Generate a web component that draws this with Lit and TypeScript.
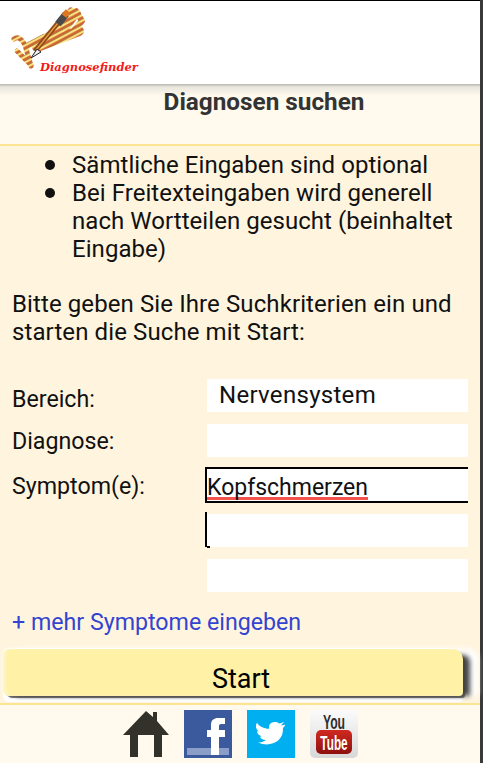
import { LitElement, html, css } from 'lit';
import { customElement } from 'lit/decorators.js';

@customElement('app-root')
export class AppRoot extends LitElement {
  static styles = css`
    :host {
      display: block;
      width: 483px;
      height: 763px;
      overflow: hidden;
      background: #3a3a3a;
      font-family: Roboto, sans-serif;
      color: #111;
    }
    .page {
      width: 480px;
      height: 763px;
      display: flex;
      flex-direction: column;
      background: #fff5df;
    }
    .header {
      height: 83px;
      flex: none;
      background: #fff;
      border-top: 1px solid #000;
    }
    .logo {
      display: block;
    }
    .logo-text {
      font-family: 'DejaVu Serif', serif;
      font-weight: 700;
      font-style: italic;
      font-size: 11.5px;
      fill: #f41a1a;
    }
    .title-bar {
      height: 62px;
      flex: none;
      box-sizing: border-box;
      background: linear-gradient(#b9b6ae 0, #e9e6de 3px, #fffaed 12px);
      border-bottom: 2px solid #fde493;
      padding: 5px 0 0 48px;
      text-align: center;
      font-size: 24.3px;
      line-height: 26px;
      font-weight: 700;
      color: #333;
    }
    .content {
      flex: 1;
      display: flex;
      flex-direction: column;
    }
    ul {
      margin: 5px 0 0;
      padding: 0 20px 0 45px;
      list-style: none;
      font-size: 24px;
      line-height: 28px;
      letter-spacing: 0.05px;
    }
    li {
      display: flex;
      gap: 17px;
    }
    li::before {
      content: '';
      flex: none;
      width: 10px;
      height: 10px;
      margin-top: 9px;
      border-radius: 50%;
      background: #111;
    }
    .intro {
      margin: 27px 0 0;
      padding: 0 12px 0 12px;
      font-size: 24px;
      line-height: 28px;
      letter-spacing: 0.1px;
    }
    .form {
      margin: 33px 0 0;
      padding: 0 12px 0 12px;
      display: grid;
      grid-template-columns: 195px 261px;
      row-gap: 12px;
      font-size: 23.2px;
    }
    .label {
      height: 33px;
      display: flex;
      align-items: flex-end;
      line-height: 26px;
      box-sizing: border-box;
      padding-bottom: 3px;
    }
    .label.first {
      padding-bottom: 0;
    }
    .field {
      height: 33px;
      background: #fff;
      font-size: 23px;
      line-height: 33px;
      position: relative;
      white-space: nowrap;
    }
    .selected {
      padding-left: 12px;
      font-size: 24px;
      letter-spacing: 0.3px;
    }
    .focused {
      margin: -2px 0 -1px -2px;
      height: 32px;
      border: solid #000;
      border-width: 2px 0 2px 2px;
      line-height: 37px;
    }
    .spell {
      border-bottom: 3px solid #f4524d;
      display: inline-block;
      line-height: 18px;
    }
    .cursor::before {
      content: '';
      position: absolute;
      left: -2px;
      top: -2px;
      width: 2px;
      height: 35px;
      background: #000;
    }
    .cursor::after {
      content: '';
      position: absolute;
      left: 0;
      bottom: -1px;
      width: 3px;
      height: 2px;
      background: #000;
    }
    .more {
      margin: 16px 0 0 12px;
      font-size: 23.2px;
      line-height: 28px;
      color: #3344d0;
    }
    .start {
      margin: 13px 0 0 3px;
      width: 460px;
      height: 47px;
      box-sizing: border-box;
      padding-left: 16px;
      background: #fff1a6;
      border-radius: 6px 10px 4px 6px;
      box-shadow: inset 4px 0 4px -2px rgba(255, 255, 255, 0.5),
        10px 3px 5px -3px #444,
        3px 3px 1px -1px #666,
        15px 0 5px #fff,
        0 -1px 2px #fff,
        0 6px 0 #fff;
      text-align: center;
      font-size: 27px;
      line-height: 60px;
      color: #000;
    }
    .footer {
      margin-top: auto;
      height: 60px;
      flex: none;
      box-sizing: border-box;
      background: #fffaed;
      border-top: 2px solid #fde493;
      display: flex;
      justify-content: center;
      gap: 15px;
      padding: 5px 0 0 1px;
      position: relative;
    }
    .footer svg {
      display: block;
      flex: none;
    }
  `;

  // rough redraw of the striped scribble and pencil from the logo
  logo() {
    return html`<svg class="logo" width="145" height="83" viewBox="0 0 145 83">
      <defs>
        <pattern id="hatch" width="5" height="5" patternUnits="userSpaceOnUse" patternTransform="rotate(-28)">
          <rect width="5" height="5" fill="#f8e27c"/>
          <rect y="2.2" width="5" height="1.6" fill="#d4502a"/>
          <rect y="3.8" width="5" height="0.8" fill="#8a3418"/>
        </pattern>
      </defs>
      <g fill="none" stroke="url(#hatch)" stroke-linecap="round" stroke-linejoin="round">
        <path stroke-width="5" d="M14 38 C18 35 22 38 25 44 L31 65"/>
        <path stroke-width="5" d="M17 50 L31 64"/>
        <path stroke-width="6" d="M27 45 L44 36"/>
        <path stroke-width="10" d="M37 46 L79 30"/>
        <path stroke-width="8" d="M44 38 L60 28"/>
        <path stroke-width="7" d="M56 32 L71 10"/>
        <path stroke-width="7" d="M66 27 L77 12"/>
        <path stroke-width="6" d="M75 28 L82 20 L76 10"/>
      </g>
      <path d="M35 50 L62 17" stroke="#8f4a1c" stroke-width="5"/>
      <path d="M36 49 L62 17" stroke="#e7a23c" stroke-width="1.2"/>
      <path d="M58 23 L66 13" stroke="#4a4a4a" stroke-width="7"/>
      <path d="M64 15 L68 10" stroke="#e0761e" stroke-width="6"/>
      <path d="M37 48 L31 57 L41 51 Z" fill="#eee" stroke="#222" stroke-width="1"/>
      <text class="logo-text" x="40" y="70">Diagnosefinder</text>
    </svg>`;
  }

  render() {
    return html`
      <div class="page">
        <div class="header">${this.logo()}</div>
        <div class="title-bar">Diagnosen suchen</div>
        <div class="content">
          <ul>
            <li><span>Sämtliche Eingaben sind optional</span></li>
            <li><span>Bei Freitexteingaben wird generell nach Wortteilen gesucht (beinhaltet Eingabe)</span></li>
          </ul>
          <p class="intro">Bitte geben Sie Ihre Suchkriterien ein und starten die Suche mit Start:</p>
          <div class="form">
            <div class="label first">Bereich:</div>
            <div class="field selected">Nervensystem</div>
            <div class="label">Diagnose:</div>
            <div class="field"></div>
            <div class="label">Symptom(e):</div>
            <div class="field focused"><span class="spell">Kopfschmerzen</span></div>
            <div></div>
            <div class="field cursor"></div>
            <div></div>
            <div class="field"></div>
          </div>
          <div class="more">+ mehr Symptome eingeben</div>
          <div class="start">Start</div>
          <div class="footer">
            <svg width="46" height="48" viewBox="0 0 46 48">
              <path fill="#33322a" d="M23 1 L30 7 V2 H34 V11 L46 25 H39 V47 H31 V25 H15 V47 H7 V25 H0 Z"/>
            </svg>
            <svg width="48" height="48" viewBox="0 0 48 48">
              <rect width="48" height="48" fill="#3b5a9e"/>
              <rect x="3" y="38" width="42" height="7" fill="#8a9ec8"/>
              <path fill="#fff" d="M27 45 V27 H23 V20 H27 V15 C27 10 30 8 34 8 H41 V14 H37 C35.5 14 35 15 35 16 V20 H41 V27 H35 V45 Z"/>
            </svg>
            <svg width="48" height="48" viewBox="0 0 48 48">
              <rect width="48" height="48" fill="#00aff0"/>
              <path transform="translate(0 1.5) scale(1 .86)" fill="#fff" d="M38 15 C36 16 35 16 34 16 C35 15 36 14 37 12 C35 13 34 14 32 14 C29 11 23 12 22 17 L22 20 C17 20 12 17 10 13 C8 17 9 21 12 23 L10 23 C10 26 12 28 15 29 L13 29 C14 32 16 33 19 33 C16 35 14 36 11 36 C22 42 37 36 36 19 C37 18 38 17 38 15 Z"/>
            </svg>
            <svg width="48" height="48" viewBox="0 0 48 48">
              <defs>
                <linearGradient id="yt-bg" x1="0" y1="0" x2="0" y2="1">
                  <stop offset="0" stop-color="#fbfbfb"/>
                  <stop offset="1" stop-color="#d8d8d8"/>
                </linearGradient>
                <linearGradient id="yt-red" x1="0" y1="0" x2="0" y2="1">
                  <stop offset="0" stop-color="#d02a20"/>
                  <stop offset="1" stop-color="#8e0f0c"/>
                </linearGradient>
              </defs>
              <rect width="48" height="48" rx="5" fill="url(#yt-bg)"/>
              <rect x="6" y="20" width="36" height="24" rx="5" fill="url(#yt-red)"/>
              <text transform="translate(24 19) scale(.61 1)" text-anchor="middle" font-family="'Liberation Sans', sans-serif" font-size="20" font-weight="700" fill="#2e2e2e">You</text>
              <text transform="translate(24 40) scale(.59 1)" text-anchor="middle" font-family="'Liberation Sans', sans-serif" font-size="20" font-weight="700" fill="#fff">Tube</text>
            </svg>
          </div>
        </div>
      </div>
    `;
  }
}
